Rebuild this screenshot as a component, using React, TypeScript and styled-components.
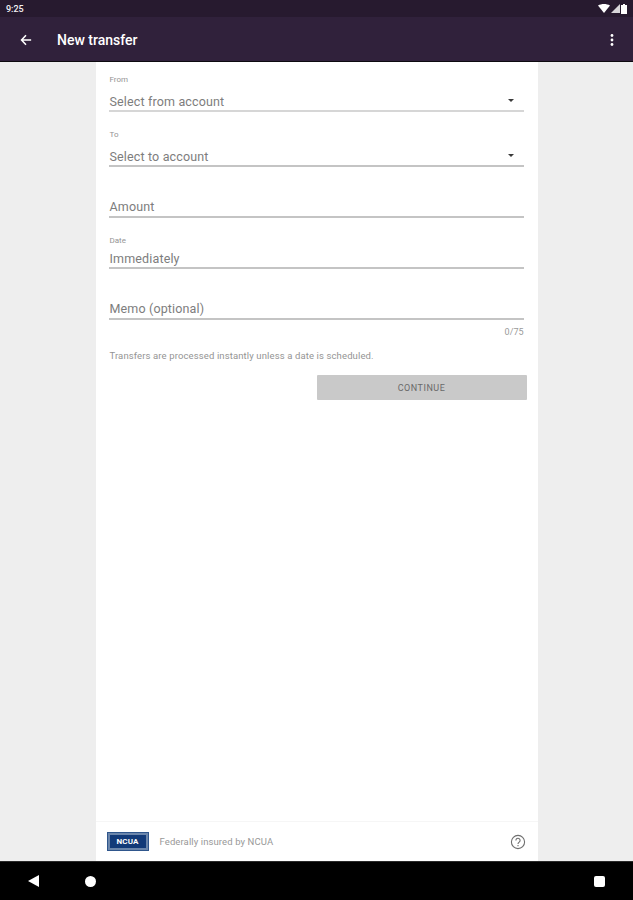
import React from "react";
import styled, { createGlobalStyle } from "styled-components";

const Global = createGlobalStyle`
  html, body { margin: 0; padding: 0; background: #eeeeee; }
  * { box-sizing: border-box; }
`;

const Screen = styled.div`
  width: 633px;
  height: 900px;
  display: flex;
  flex-direction: column;
  font-family: Roboto, "Liberation Sans", sans-serif;
  overflow: hidden;
  background: #eeeeee;
`;

const StatusBar = styled.div`
  height: 17px;
  flex: none;
  display: flex;
  align-items: center;
  justify-content: space-between;
  padding: 0 6px 0 6px;
  background: #271a2f;
  color: #f4f2f5;
  font-size: 9px;
  font-weight: 500;
`;

const StatusIcons = styled.div`
  display: flex;
  align-items: center;
  gap: 1px;
`;

const Toolbar = styled.header`
  height: 45px;
  flex: none;
  display: flex;
  align-items: center;
  padding: 2px 19px 0 20px;
  background: #30213b;
  border-bottom: 1px solid #0d0a10;
  color: #ffffff;
`;

const Title = styled.h1`
  margin: 0 0 0 25px;
  flex: 1;
  font-size: 14px;
  font-weight: 500;
`;

const Body = styled.main`
  flex: 1;
  min-height: 0;
  display: flex;
  justify-content: center;
`;

const Card = styled.div`
  width: 442px;
  display: flex;
  flex-direction: column;
  background: #ffffff;
`;

const Form = styled.div`
  flex: 1;
  display: flex;
  flex-direction: column;
  padding: 12px 14px 0 13px;
`;

const Field = styled.div<{ $top: number; $soft?: boolean; $lift: number }>`
  height: 38px;
  margin-top: ${(p) => p.$top}px;
  position: relative;
  display: flex;
  flex-direction: column;
  justify-content: flex-end;
  border-bottom: 2px solid ${(p) => (p.$soft ? "#d6d6d6" : "#c4c4c4")};
  padding-bottom: ${(p) => p.$lift}px;
`;

const Label = styled.span<{ $top: number }>`
  position: absolute;
  left: 1px;
  top: ${(p) => p.$top}px;
  font-size: 8px;
  line-height: 10px;
  color: #949494;
`;

const Value = styled.div`
  display: flex;
  align-items: center;
  justify-content: space-between;
  padding-left: 1px;
  font-size: 12.5px;
  line-height: 16px;
  letter-spacing: 0.15px;
  color: #7d7d7d;
`;

const Arrow = styled.span`
  width: 0;
  height: 0;
  margin: -3px 10px 0 0;
  border-left: 3px solid transparent;
  border-right: 3px solid transparent;
  border-top: 3px solid #3a3a3a;
`;

const Counter = styled.div`
  margin-top: 7px;
  text-align: right;
  font-size: 9px;
  line-height: 11px;
  color: #9a9a9a;
`;

const Hint = styled.p`
  margin: 12px 0 0;
  padding-left: 1px;
  font-size: 9.5px;
  line-height: 12px;
  letter-spacing: 0.12px;
  color: #949494;
`;

const ButtonRow = styled.div`
  display: flex;
  justify-content: flex-end;
  margin: 13px -3px 0 0;
`;

const Continue = styled.button`
  width: 210px;
  height: 25px;
  border: 0;
  border-radius: 1px;
  background: #c9c9c9;
  color: #6a6a6a;
  font: 400 9px Roboto, "Liberation Sans", sans-serif;
  letter-spacing: 0.5px;
`;

const Footer = styled.footer`
  height: 40px;
  flex: none;
  display: flex;
  align-items: center;
  padding: 0 12px 0 11px;
  border-top: 1px solid #f6f6f6;
`;

const Badge = styled.div`
  width: 42px;
  height: 19px;
  display: flex;
  align-items: center;
  justify-content: center;
  border: 3px solid #6b86ab;
  outline: 1px solid #2f568c;
  outline-offset: -1px;
  background: #123a78;
  color: #ffffff;
  font-size: 8px;
  font-weight: 700;
  letter-spacing: 0.2px;
`;

const FooterText = styled.span`
  flex: 1;
  margin-left: 11px;
  font-size: 9.5px;
  letter-spacing: 0.1px;
  color: #989898;
`;

const NavBar = styled.nav`
  height: 39px;
  flex: none;
  display: flex;
  align-items: center;
  padding: 0 28px;
  justify-content: space-between;
  background: #000000;
  border-top: 1px solid #2a2a2a;
`;

const NavLeft = styled.div`
  display: flex;
  align-items: center;
  gap: 46px;
`;

const HomeDot = styled.span`
  width: 11px;
  height: 11px;
  border-radius: 50%;
  background: #ffffff;
`;

const RecentSquare = styled.span`
  width: 11px;
  height: 11px;
  border-radius: 2px;
  background: #ffffff;
`;

const fields = [
  { label: "From", labelTop: 1, value: "Select from account", select: true, top: 0, lift: 0, soft: true },
  { label: "To", labelTop: 1, value: "Select to account", select: true, top: 17, lift: 0 },
  { value: "Amount", top: 13, lift: 1 },
  { label: "Date", labelTop: 5, value: "Immediately", top: 13, lift: 0 },
  { value: "Memo (optional)", top: 13, lift: 1 },
];

export default function App() {
  return (
    <Screen>
      <Global />
      <StatusBar>
        <span>9:25</span>
        <StatusIcons>
          <svg width="12" height="9" viewBox="0 0 12 9">
            <path d="M0 1.5C3.5-.5 8.5-.5 12 1.5L6 9z" fill="#fff" />
          </svg>
          <svg width="9" height="9" viewBox="0 0 9 9">
            <path d="M9 0v9H0z" fill="#d8d6da" />
          </svg>
          <svg width="6" height="10" viewBox="0 0 6 10">
            <path d="M2 0h2v1h2v9H0V1h2z" fill="#fff" />
          </svg>
        </StatusIcons>
      </StatusBar>
      <Toolbar>
        <svg width="12" height="12" viewBox="0 0 14 14" fill="none" stroke="#fff" strokeWidth="1.8">
          <path d="M13 7H2M7 1.5 1.8 7 7 12.5" />
        </svg>
        <Title>New transfer</Title>
        <svg width="4" height="14" viewBox="0 0 4 14" fill="#fff">
          <circle cx="2" cy="2.5" r="1.4" />
          <circle cx="2" cy="7" r="1.4" />
          <circle cx="2" cy="11.5" r="1.4" />
        </svg>
      </Toolbar>
      <Body>
        <Card>
          <Form>
            {fields.map((f) => (
              <Field key={f.value} $top={f.top} $lift={f.lift} $soft={f.soft}>
                {f.label && <Label $top={f.labelTop ?? 0}>{f.label}</Label>}
                <Value>
                  {f.value}
                  {f.select && <Arrow />}
                </Value>
              </Field>
            ))}
            <Counter>0/75</Counter>
            <Hint>Transfers are processed instantly unless a date is scheduled.</Hint>
            <ButtonRow>
              <Continue>CONTINUE</Continue>
            </ButtonRow>
          </Form>
          <Footer>
            <Badge>NCUA</Badge>
            <FooterText>Federally insured by NCUA</FooterText>
            <svg width="16" height="16" viewBox="0 0 16 16" fill="none" stroke="#6f6f6f" strokeWidth="1.1">
              <circle cx="8" cy="8" r="6.6" />
              <path d="M5.9 6.4a2.1 2.1 0 1 1 3.3 1.7C8.4 8.7 8 9 8 10" />
              <path d="M8 11v1.3" />
            </svg>
          </Footer>
        </Card>
      </Body>
      <NavBar>
        <NavLeft>
          <svg width="11" height="12" viewBox="0 0 11 12">
            <path d="M11 0v12L0 6z" fill="#fff" />
          </svg>
          <HomeDot />
        </NavLeft>
        <RecentSquare />
      </NavBar>
    </Screen>
  );
}
